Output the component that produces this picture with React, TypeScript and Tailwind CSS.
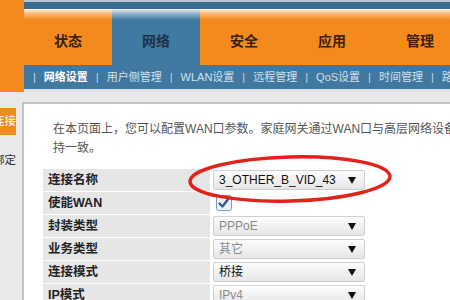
const tabs = [
  { name: "状态", active: false },
  { name: "网络", active: true },
  { name: "安全", active: false },
  { name: "应用", active: false },
  { name: "管理", active: false },
];

const subnav = ["网络设置", "用户侧管理", "WLAN设置", "远程管理", "QoS设置", "时间管理", "路由配置"];

function Arrow() {
  return (
    <svg width="8" height="7" viewBox="0 0 8 7" className="shrink-0">
      <path d="M0 0 H8 L4 7 Z" fill="#111" />
    </svg>
  );
}

function Select({ value, dim }: { value: string; dim?: boolean }) {
  return (
    <div className="w-[152px] h-[20px] flex items-center justify-between pl-[5px] pr-[8px] rounded-[2px] border border-[#cfcfcf] bg-[linear-gradient(to_bottom,#fdfdfd,#e6e6e6)]">
      <span className={`text-[12px] ${dim ? "text-[#8a8a8a]" : "text-[#111]"}`}>{value}</span>
      <Arrow />
    </div>
  );
}

function Checkbox() {
  return (
    <svg width="16" height="16" viewBox="0 0 16 16">
      <rect x="0.5" y="0.5" width="15" height="15" rx="2" fill="#eef3f8" stroke="#7f98b5" />
      <path d="M3.5 8.5 L6.5 11.5 L12.5 3.5" fill="none" stroke="#2b5c9c" strokeWidth="2.4" strokeLinecap="round" strokeLinejoin="round" />
    </svg>
  );
}

const rows: { label: string; value?: string; dim?: boolean; check?: boolean }[] = [
  { label: "连接名称", value: "3_OTHER_B_VID_43" },
  { label: "使能WAN", check: true },
  { label: "封装类型", value: "PPPoE", dim: true },
  { label: "业务类型", value: "其它", dim: true },
  { label: "连接模式", value: "桥接" },
  { label: "IP模式", value: "IPv4", dim: true },
];

export default function App() {
  return (
    <div className="relative w-[450px] h-[300px] overflow-hidden bg-[#e9e9e9] font-['Liberation_Sans','Noto_Sans_CJK_SC',sans-serif]">
      {/* header */}
      <div className="flex h-[92px]">
        <div className="w-[24px] bg-[#f28a1e]" />
        <div className="flex-1 flex flex-col min-w-0">
          <div className="h-[9px] bg-[#3b6c92] border-t-2 border-[#b9c7d2]" />
          <div className="flex h-[56px]">
            {tabs.map((t) => (
              <div
                key={t.name}
                className={`w-[88px] shrink-0 flex items-center justify-center pt-[8px] text-[14px] font-bold ${
                  t.active
                    ? "bg-[linear-gradient(to_bottom,#e8eef3_0px,#8fb0c8_5px,#4079a1_11px,#4079a1)] text-[#1c3347]"
                    : "bg-[linear-gradient(to_bottom,#fdf0e0_0px,#f9b56c_5px,#f28a1e_11px,#f28a1e)] text-[#3a2108]"
                }`}
              >
                {t.name}
              </div>
            ))}
          </div>
          <div className="h-[24px] bg-[#4078a0] flex items-center pl-[9px] gap-[8px] text-[11px] text-[#d3e0ea] whitespace-nowrap overflow-hidden">
            {subnav.map((s, i) => (
              <span key={s} className="flex items-center gap-[8px]">
                <span className="text-[#c5d5e2]">|</span>
                <span className={i === 0 ? "font-bold text-white" : ""}>{s}</span>
              </span>
            ))}
          </div>
          <div className="h-[3px] bg-[#dce1e5]" />
        </div>
      </div>

      {/* body */}
      <div className="flex h-[208px]">
        <div className="w-[22px] shrink-0 flex flex-col pt-[16px]">
          <div className="w-[16px] h-[27px] bg-[#f08a20] flex items-center justify-end overflow-hidden whitespace-nowrap text-[11.5px] text-white">
            连接
          </div>
          <div className="w-[16px] mt-[17px] flex justify-end overflow-hidden whitespace-nowrap text-[11.5px] text-[#333]">
            绑定
          </div>
        </div>

        <div className="flex-1 min-w-0 mt-[10px] bg-white border-l-2 border-t-2 border-[#c3c3c3] pt-[16px] overflow-hidden">
          <div className="pl-[29px] text-[12px] leading-[19px] text-[#555] whitespace-nowrap">
            <div>在本页面上，您可以配置WAN口参数。家庭网关通过WAN口与高层网络设备通信，WAN口参数必须与高层网络设备保</div>
            <div>持一致。</div>
          </div>

          <div className="ml-[19px] mt-[11px] flex flex-col gap-[1px]">
            {rows.map((r) => (
              <div key={r.label} className="flex h-[22px]">
                <div className="w-[167px] shrink-0 bg-[#e6e6e6] flex items-center pl-[5px] text-[12.5px] font-bold text-[#222]">
                  {r.label}
                </div>
                <div className="flex items-center pl-[3px]">
                  {r.check ? (
                    <span className="pl-[3px] flex">
                      <Checkbox />
                    </span>
                  ) : (
                    <Select value={r.value ?? ""} dim={r.dim} />
                  )}
                </div>
              </div>
            ))}
          </div>
        </div>
      </div>

      {/* red annotation circle */}
      <svg className="absolute left-[186px] top-[153px]" width="208" height="54" viewBox="0 0 208 54">
        <ellipse cx="104" cy="26" rx="100" ry="22" fill="none" stroke="#e0231b" strokeWidth="3.5" transform="rotate(-1.5 104 26)" />
      </svg>
    </div>
  );
}
